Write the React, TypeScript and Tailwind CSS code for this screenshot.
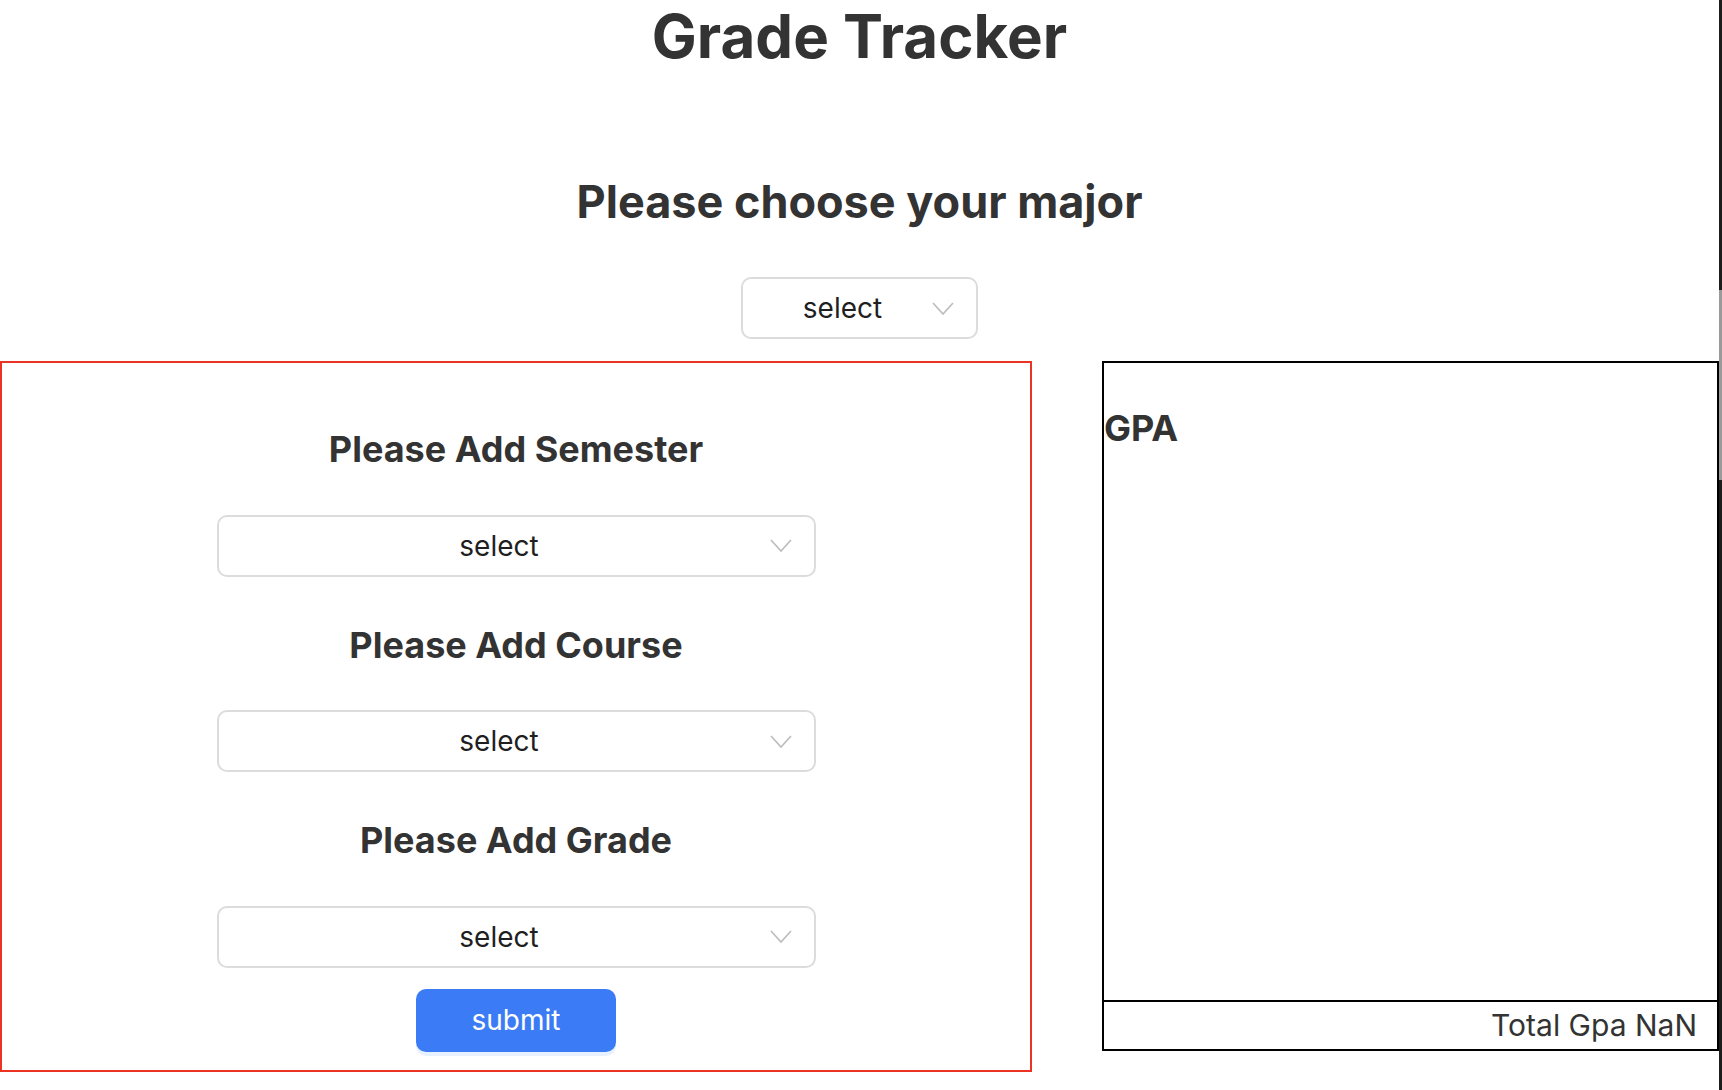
import React from 'react'

function Chevron() {
  return (
    <svg width="22" height="13" viewBox="0 0 22 13" fill="none" className="shrink-0">
      <polyline points="1,1 11,12 21,1" stroke="#bdbdbd" strokeWidth="1.7" />
    </svg>
  )
}

function SelectBox({ className }: { className: string }) {
  return (
    <div
      className={`flex h-[62px] items-center rounded-[10px] border-2 border-[#dcdcdc] bg-white pl-[10px] pr-[22px] ${className}`}
    >
      <span className="flex-1 text-center text-[28px] text-[#1f1f1f]">select</span>
      <Chevron />
    </div>
  )
}

const sections = ['Please Add Semester', 'Please Add Course', 'Please Add Grade']

export default function App() {
  return (
    <div className="flex min-h-[1090px] bg-white text-[#333]" style={{ fontFamily: 'Inter, "Noto Sans", sans-serif' }}>
      <div className="w-[1719px] shrink-0">
        <h1 className="text-center text-[60px] font-bold leading-[1.21]">Grade Tracker</h1>

        <h2 className="mt-[102px] text-center text-[45px] font-bold leading-[1.21]">
          Please choose your major
        </h2>

        <SelectBox className="mx-auto mt-[48px] w-[237px]" />

        <div className="mt-[22px] flex items-start">
          {/* form */}
          <div className="box-border h-[711px] w-[1032px] border-2 border-[#eb3323] pt-[65px]">
            {sections.map((title, i) => (
              <div key={title} className={i === 0 ? '' : 'mt-[47px]'}>
                <h3 className="text-center text-[36px] font-bold leading-[1.21]">{title}</h3>
                <SelectBox className="mx-auto mt-[43px] w-[599px]" />
              </div>
            ))}
            <button className="mx-auto mt-[21px] block h-[63px] w-[200px] rounded-[10px] bg-[#3b7cf6] text-[28px] text-white shadow-[0_4px_0_#e8f1ff]">
              submit
            </button>
          </div>

          {/* gpa panel */}
          <div className="ml-[70px] box-border flex h-[690px] w-[617px] flex-col border-2 border-black">
            <h3 className="mt-[44px] text-[36px] font-bold leading-[1.21]">GPA</h3>
            <div className="flex-1" />
            <div className="flex h-[49px] items-center justify-end border-t-2 border-black pr-[20px] text-[30px]">
              Total Gpa NaN
            </div>
          </div>
        </div>
      </div>

      {/* window edge */}
      <div className="flex w-[3px] flex-col bg-[#1c1c1c]">
        <div className="mt-[290px] h-[190px] bg-[#9a9a9a]" />
      </div>
    </div>
  )
}
